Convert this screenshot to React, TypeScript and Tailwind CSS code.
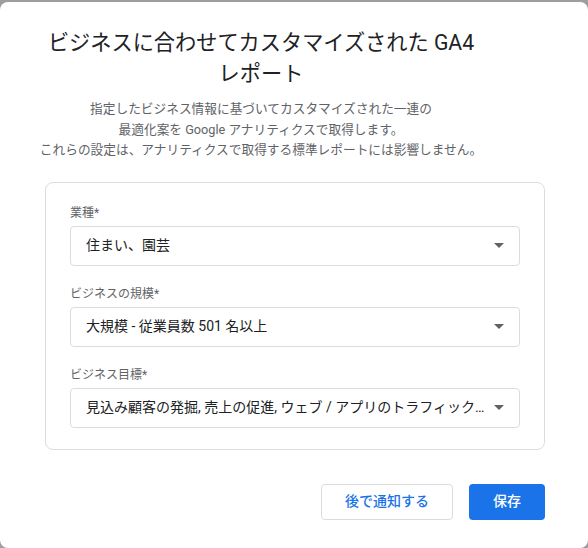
import React from 'react';

const FONT = { fontFamily: 'Roboto, "Noto Sans CJK JP", "Noto Sans", sans-serif' };

interface SelectFieldProps {
  label: string;
  value: string;
}

const SelectField: React.FC<SelectFieldProps> = ({ label, value }) => (
  <div className="flex flex-col">
    <div className="text-[12px] leading-[16px] text-[#5f6368] mb-[5px]">{label}*</div>
    <div className="flex h-[40px] items-center rounded-[4px] border border-[#dadce0] pl-[15px] pr-[15px]">
      <span className="flex-1 truncate text-[14px] text-[#202124]">{value}</span>
      {/* dropdown arrow */}
      <svg className="ml-[8px] shrink-0" width="10" height="5" viewBox="0 0 10 5">
        <path d="M0 0h10L5 5z" fill="#5f6368" />
      </svg>
    </div>
  </div>
);

export default function App() {
  return (
    <div className="h-[548px] w-[588px] bg-[#9e9e9e] pt-[2px]" style={FONT}>
      <div className="flex h-[546px] flex-col rounded-[8px] bg-white">
        {/* Header */}
        <div className="flex flex-col items-center pt-[25px] pr-[66px] text-center">
          <h1 className="whitespace-nowrap text-[21.2px] leading-[31px] text-[#202124]">
            <span className="block">ビジネスに合わせてカスタマイズされた GA4</span>
            <span className="block">レポート</span>
          </h1>
          <p className="mt-[10px] whitespace-nowrap text-[12.7px] leading-[20.5px] text-[#5f6368]">
            指定したビジネス情報に基づいてカスタマイズされた一連の
            <br />
            最適化案を Google アナリティクスで取得します。
            <br />
            これらの設定は、アナリティクスで取得する標準レポートには影響しません。
          </p>
        </div>

        {/* Form card */}
        <div className="ml-[45px] mt-[21px] w-[500px] rounded-[8px] border border-[#dadce0] px-[24px] pt-[22px] pb-[21px]">
          <div className="flex flex-col gap-[20px]">
            <SelectField label="業種" value="住まい、園芸" />
            <SelectField label="ビジネスの規模" value="大規模 - 従業員数 501 名以上" />
            <SelectField
              label="ビジネス目標"
              value="見込み顧客の発掘, 売上の促進, ウェブ / アプリのトラフィックの増加, ユーザー行動の把握"
            />
          </div>
        </div>

        {/* Footer */}
        <div className="mt-[34px] flex justify-end gap-[16px] pr-[43px]">
          <button className="h-[36px] rounded-[4px] border border-[#dadce0] bg-white px-[23px] text-[14px] font-medium text-[#1a73e8]">
            後で通知する
          </button>
          <button className="h-[36px] rounded-[4px] bg-[#1a73e8] px-[24px] text-[14px] font-medium text-white">
            保存
          </button>
        </div>
      </div>
    </div>
  );
}
